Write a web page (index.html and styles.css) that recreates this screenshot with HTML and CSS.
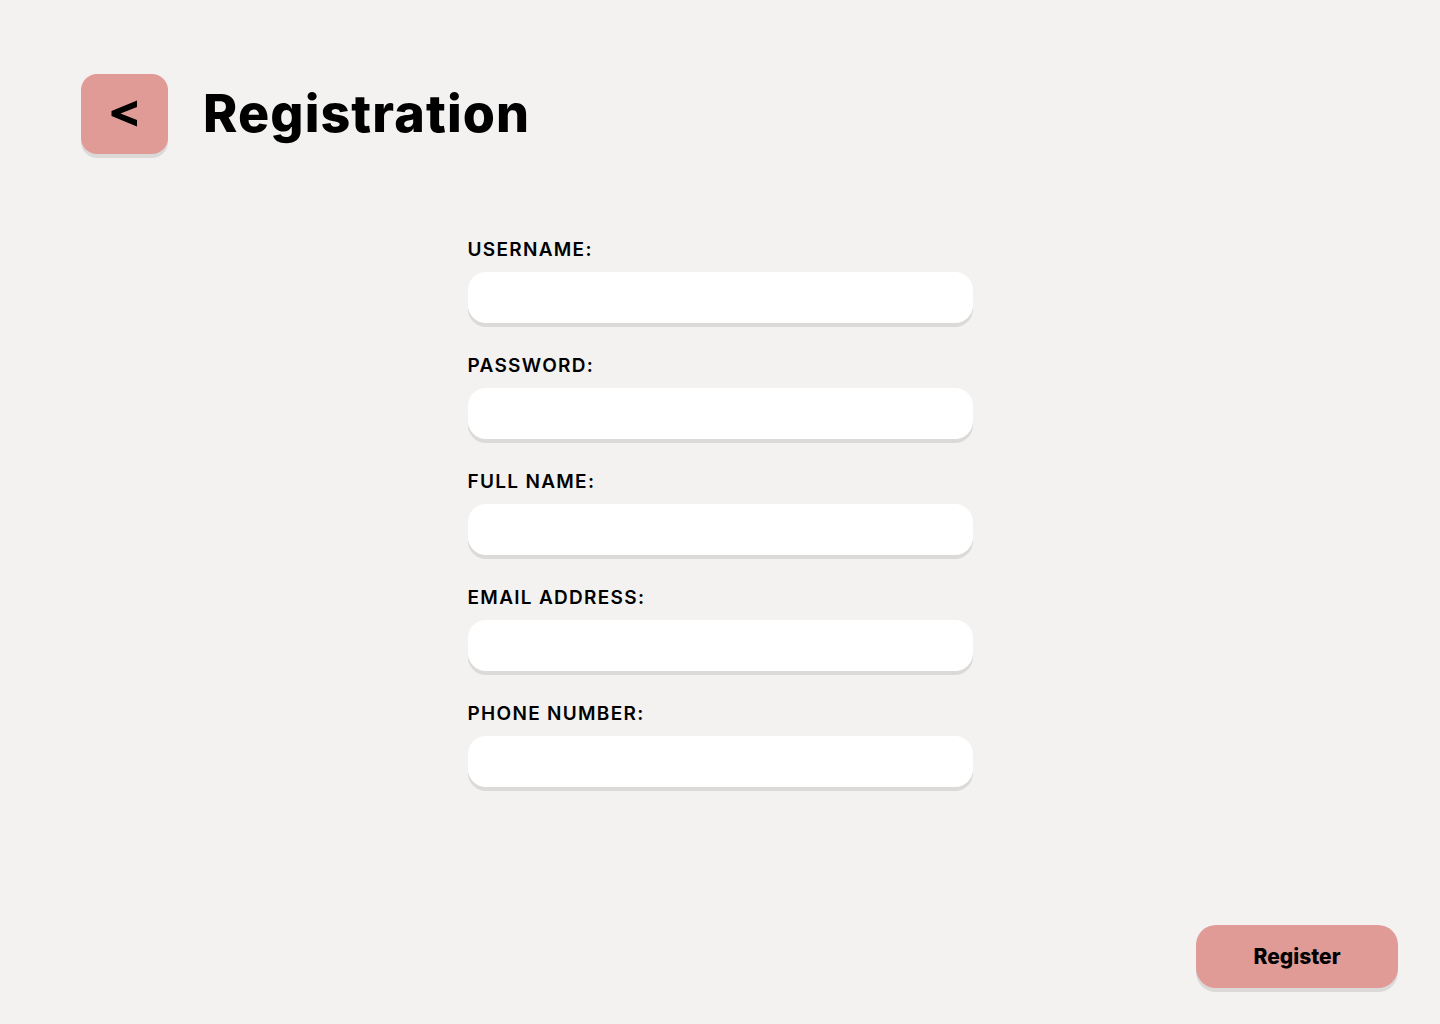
FILE: index.html
```html
<!DOCTYPE html>
<html lang="en">
<head>
<meta charset="utf-8">
<title>Registration</title>
<link rel="stylesheet" href="styles.css">
</head>
<body>
<div class="page">
  <header class="header">
    <button class="back" type="button" aria-label="Back">
      <svg width="87" height="80" viewBox="0 0 87 80" aria-hidden="true">
        <polygon points="56,26.5 56,33 39.5,39.5 56,46 56,52.5 30.5,42 30.5,37" fill="#000"/>
      </svg>
    </button>
    <h1 class="title">Registration</h1>
  </header>
  <main class="form">
    <label class="field">
      <span class="label">USERNAME:</span>
      <input class="input" type="text">
    </label>
    <label class="field">
      <span class="label">PASSWORD:</span>
      <input class="input" type="password">
    </label>
    <label class="field">
      <span class="label">FULL NAME:</span>
      <input class="input" type="text">
    </label>
    <label class="field">
      <span class="label">EMAIL ADDRESS:</span>
      <input class="input" type="email">
    </label>
    <label class="field">
      <span class="label">PHONE NUMBER:</span>
      <input class="input" type="tel">
    </label>
  </main>
  <footer class="footer">
    <button class="register" type="button">Register</button>
  </footer>
</div>
</body>
</html>
```
FILE: styles.css
```css
* { box-sizing: border-box; }
html, body {
  margin: 0;
  padding: 0;
  background: #f3f2f0;
  font-family: Inter, "Open Sans", "DejaVu Sans", sans-serif;
  color: #000;
}
.page {
  height: 1024px;
  display: flex;
  flex-direction: column;
}
.header {
  display: flex;
  align-items: center;
  gap: 35px;
  padding: 74px 0 0 81px;
}
.back {
  width: 87px;
  height: 80px;
  border: none;
  padding: 0;
  border-radius: 16px;
  background: #e09b97;
  box-shadow: 0 4px 0 #dbdad8;
  display: flex;
  align-items: center;
  justify-content: center;
  cursor: pointer;
}
.back svg { display: block; }
.title {
  margin: 0;
  font-size: 52px;
  font-weight: 800;
  letter-spacing: 1.1px;
  line-height: 80px;
}
.form {
  align-self: center;
  width: 505px;
  margin-top: 85px;
  display: flex;
  flex-direction: column;
  gap: 32px;
}
.field {
  display: flex;
  flex-direction: column;
  gap: 11px;
}
.label {
  font-size: 19px;
  font-weight: 600;
  line-height: 22px;
  letter-spacing: 1.3px;
}
.input {
  width: 505px;
  height: 51px;
  border: none;
  border-radius: 18px;
  background: #fff;
  box-shadow: 0 4px 0 #dbdad8;
  outline: none;
  padding: 0 20px;
  font: inherit;
}
.footer {
  margin-top: auto;
  display: flex;
  justify-content: flex-end;
  padding: 0 42px 36px 0;
}
.register {
  width: 202px;
  height: 63px;
  border: none;
  border-radius: 20px;
  background: #e09b97;
  box-shadow: 0 4px 0 #dbdad8;
  font-family: Inter, "Open Sans", sans-serif;
  font-size: 21px;
  font-weight: 800;
  color: #000;
  cursor: pointer;
}
```
